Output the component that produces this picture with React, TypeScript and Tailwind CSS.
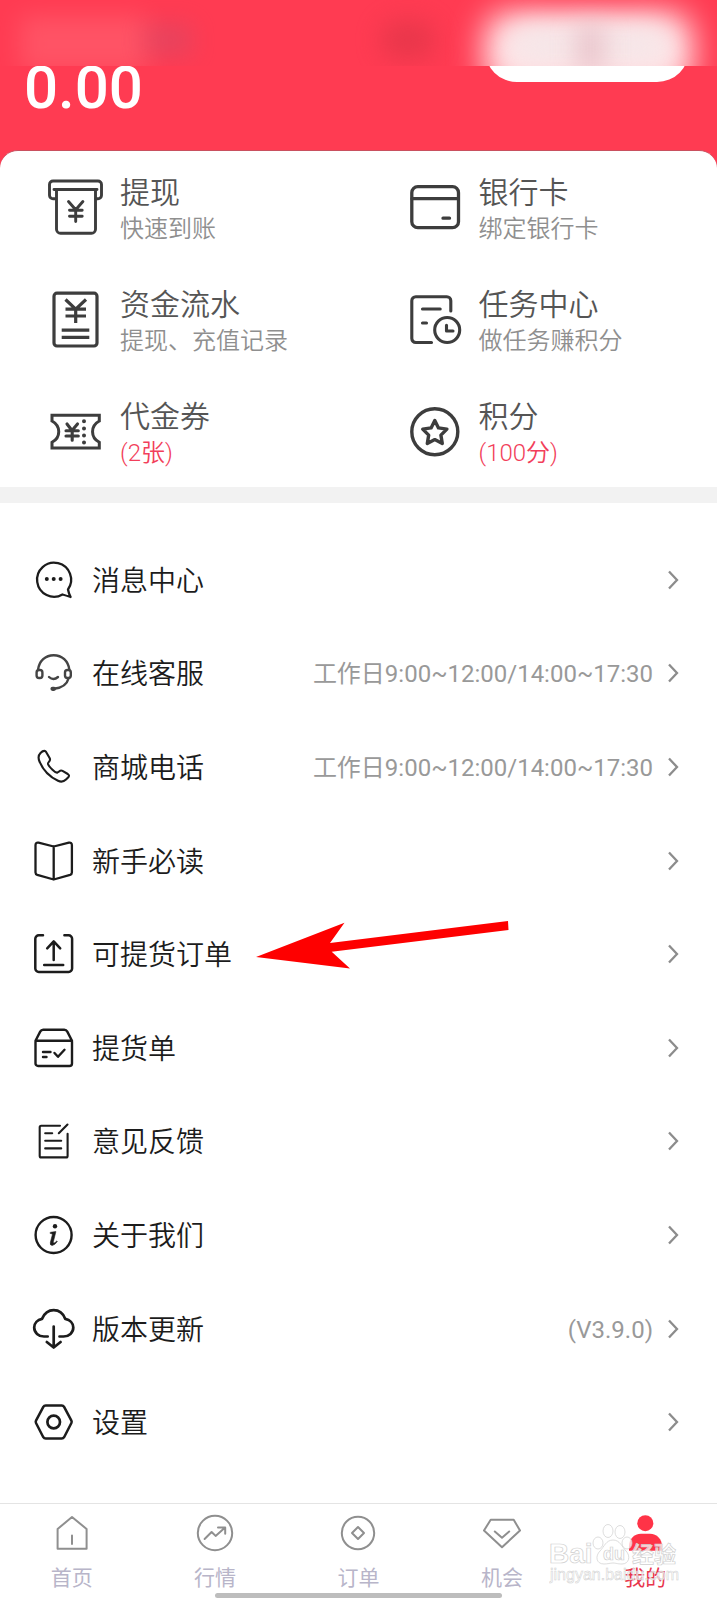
import type { ReactNode } from 'react';
import { clsx } from 'clsx';

type IconProps = { children: ReactNode; size?: 'lg' | 'md'; width?: number };

function Icon({ children, size = 'md', width = 2.4 }: IconProps) {
  return (
    <svg
      viewBox={size === 'lg' ? '0 0 56 56' : '0 0 40 40'}
      className={clsx('shrink-0 overflow-visible', size === 'lg' ? 'size-14' : 'size-10')}
      fill="none"
      stroke="currentColor"
      strokeWidth={width}
      strokeLinecap="round"
      strokeLinejoin="round"
      aria-hidden="true"
    >
      {children}
    </svg>
  );
}

const services = [
  {
    title: '提现',
    note: '快速到账',
    icon: (
      <Icon size="lg" width={2.9}>
        <path d="M7.5 19.7H5a3.5 3.5 0 0 1-3.5-3.5V5.5A3.5 3.5 0 0 1 5 2h45a3.5 3.5 0 0 1 3.5 3.5v10.7a3.5 3.5 0 0 1-3.5 3.5h-2" />
        <path d="M6 10.5h43M8.5 10.5v39.7a4 4 0 0 0 4 4h31a4 4 0 0 0 4-4V10.5" />
        <path d="M20.5 22.5l7.2 8.3 7.2-8.3M21.5 31.3h12.7M21.5 37.3h12.7M27.7 31v11.5" />
      </Icon>
    ),
  },
  {
    title: '银行卡',
    note: '绑定银行卡',
    icon: (
      <Icon size="lg" width={3.3}>
        <rect x="4.8" y="7.7" width="46.7" height="41" rx="6" />
        <path d="M5 19.7h46M36 39.2h6.5" />
      </Icon>
    ),
  },
  {
    title: '资金流水',
    note: '提现、充值记录',
    icon: (
      <Icon size="lg" width={3.2}>
        <rect x="6" y="2.2" width="43" height="52.8" rx="3" />
        <g strokeLinecap="butt">
          <path d="M17.5 8.5l10.2 9.7L38 8.5M17.5 18.2H38M17.5 25H38M27.7 18v14" strokeWidth={3.2} />
          <path d="M13.7 39.2h27.6M13.7 46.4h27.6" strokeWidth={3.2} />
        </g>
      </Icon>
    ),
  },
  {
    title: '任务中心',
    note: '做任务赚积分',
    icon: (
      <Icon size="lg" width={3.1}>
        <path d="M43.8 20V9.7a4 4 0 0 0-4-4h-31a4 4 0 0 0-4 4v37.8a4 4 0 0 0 4 4h15.7" />
        <path d="M15.5 18h17.7M15.5 32h4" />
        <circle cx="40.2" cy="39" r="12.5" />
        <path d="M39.5 34.2V40H46" />
      </Icon>
    ),
  },
  {
    title: '代金券',
    note: '(2张)',
    hot: true,
    icon: (
      <Icon size="lg" width={3}>
        <path
          strokeLinejoin="miter"
          d="M4 12.3h47.3V18c-9 5-9 16.3 0 21.3V45H4v-5.7c9-5 9-16.3 0-21.3z"
        />
        <path d="M19 21l5 6.5 5.5-6.5M18 27.7h12.3M18 33h12.3M24.2 27.5v9.8" strokeWidth={3.1} />
        <path d="M36 18.3v.01M36 25.4v.01M36 32.5v.01M36 39.4v.01" strokeWidth={4} />
      </Icon>
    ),
  },
  {
    title: '积分',
    note: '(100分)',
    hot: true,
    icon: (
      <Icon size="lg" width={3.4}>
        <circle cx="27.8" cy="28.7" r="23" />
        <path d="M27.8 17.5l3.7 7.4 8.4 1.2-6 6 1.4 8.4-7.5-3.9-7.5 3.9 1.4-8.4-6-6 8.4-1.2z" />
      </Icon>
    ),
  },
];

const menu = [
  {
    label: '消息中心',
    icon: (
      <Icon width={2.3}>
        <path d="M34 29.5A17 17 0 1 0 28.5 34.5Q32 35.5 36.6 37Q34.6 33 34 29.5z" />
        <g fill="currentColor" stroke="none">
          <circle cx="12.8" cy="19" r="2" />
          <circle cx="19.7" cy="19" r="2" />
          <circle cx="26.6" cy="19" r="2" />
        </g>
      </Icon>
    ),
  },
  {
    label: '在线客服',
    value: '工作日9:00~12:00/14:00~17:30',
    icon: (
      <Icon width={2.4}>
        <g className="text-[#444]" stroke="currentColor">
          <path d="M4 17C5 8 11.5 2.2 19.7 2.2S34.400 8 35.400 17" />
          <rect x="2.6" y="17" width="5.800" height="8" rx="2.500" />
          <rect x="31" y="17" width="5.800" height="8" rx="2.500" />
          <path d="M15 24q4.400 4.200 9 0M34.500 25.500C33 31.500 27 35 20 35.800" />
          <path d="M18.500 35.800h1.500" strokeWidth={4.200} />
        </g>
      </Icon>
    ),
  },
  {
    label: '商城电话',
    value: '工作日9:00~12:00/14:00~17:30',
    icon: (
      <Icon width={2.1}>
        <path d="M11.8 4.5C10.3 3.3 8.5 4 6.5 6C4 8.5 4 11 5.5 14.5C9 23 16 30 24 33.8C27 35.2 29.5 35 32 32.5L34.3 30.2C35.5 28.8 35 27.8 33.8 27L28.5 23.9C27.3 23.2 26.3 23.5 25.3 24.3L23.5 25.5C22.3 26 21 25.3 18.5 22.8C16 20.3 14.5 18.5 14 17C13.8 16 14.3 15.5 15.2 14.5C16.3 13.3 16.3 12.3 15.6 11z" />
      </Icon>
    ),
  },
  {
    label: '新手必读',
    icon: (
      <Icon width={2.3}>
        <path d="M19.7 5.5L4.500 1.700Q1.500 1.200 1.500 4.200v27.300q0 1.800 1.800 2.400l16.400 4.600 16.400-4.600q1.800-.6 1.800-2.400V4.200q0-3-3-2.500zV38" />
      </Icon>
    ),
  },
  {
    label: '可提货订单',
    arrow: true,
    icon: (
      <Icon width={2.5}>
        <path d="M9 1.3H4.8a3.5 3.5 0 0 0-3.5 3.5v29.6a3.5 3.5 0 0 0 3.5 3.5h29.800a3.5 3.5 0 0 0 3.5-3.5V4.8a3.5 3.5 0 0 0-3.5-3.5h-4.2" />
        <path d="M19.7 26V7.5M13.2 14.3l6.5-7 6.5 7M10.2 31h19" />
      </Icon>
    ),
  },
  {
    label: '提货单',
    icon: (
      <Icon width={2.4}>
        <path d="M1.5 12.8h36.5v22.6a2.6 2.6 0 0 1-2.6 2.6H4.1a2.6 2.6 0 0 1-2.6-2.6zL6.2 3.6q1-1.9 3-1.9h21.1q2 0 3 1.9L38 12.8" />
        <path d="M9 24h7.5M9 29h3.5M20.5 25l3.5 3.8 6.5-7" />
      </Icon>
    ),
  },
  {
    label: '意见反馈',
    icon: (
      <Icon width={2.1}>
        <path d="M26 4.7H7.2a1.5 1.5 0 0 0-1.5 1.5v28.7a1.5 1.5 0 0 0 1.5 1.5h24.9a1.5 1.5 0 0 0 1.5-1.5V12.7" />
        <path d="M33.5 3.5l-8.7 8.7M11.2 12.2h7M11.2 19.7h16M11.2 27.4h16" />
      </Icon>
    ),
  },
  {
    label: '关于我们',
    icon: (
      <Icon width={2.4}>
        <circle cx="19.6" cy="20" r="18" />
        <circle cx="21" cy="11.2" r="2.2" fill="currentColor" stroke="none" />
        <path
          d="M16.6 17.3l5.3-.7-2.5 9.9q-.5 2 .8 1.5 1.2-.5 2.6-2.1l.5.6q-2.4 3.7-5 3.9-2.7 0-1.9-3.2l1.9-7.3q.2-1-.5-1.1l-1.4-.4z"
          fill="currentColor"
          strokeWidth={0.6}
        />
      </Icon>
    ),
  },
  {
    label: '版本更新',
    value: '(V3.9.0)',
    icon: (
      <Icon width={2.7}>
        <path d="M13.7 27.500H10C4.500 27.500.2 23.500.2 18.600.2 14 3.500 10.800 8 9.900 10.500 4 14.500 1.200 19.700 1.200S29 4 31.300 9.900c4.500.9 8 4.100 8 8.700 0 4.900-4.200 8.900-9.800 8.900h-4" />
        <path d="M19.7 17.5V38.3M12.8 33l6.9 5.5 6.9-5.5" />
      </Icon>
    ),
  },
  {
    label: '设置',
    icon: (
      <Icon width={2.5}>
        <path d="M11.7 3.4h16q1.6 0 2.4 1.4l7.300 13.800q.6 1.200 0 2.400l-7.300 14.200q-.8 1.400-2.400 1.400h-16q-1.600 0-2.400-1.400L2 21q-.6-1.200 0-2.400L9.300 4.800q.8-1.400 2.400-1.400z" />
        <circle cx="19.7" cy="20" r="6.3" strokeWidth={2.7} />
      </Icon>
    ),
  },
];

const tabs = [
  {
    label: '首页',
    icon: (
      <Icon width={2}>
        <path d="M20 4L5.6 16v19.8h29V16zM20 22.5v8.5" />
      </Icon>
    ),
  },
  {
    label: '行情',
    icon: (
      <Icon width={2}>
        <circle cx="20" cy="20" r="17.2" />
        <path d="M9.6 26l7-7 4 3.9 9.5-8.3M23 14.5h7.2v6.3" />
      </Icon>
    ),
  },
  {
    label: '订单',
    icon: (
      <Icon width={2}>
        <circle cx="20" cy="20" r="16.2" />
        <path d="M20 14l6 6-6 6-6-6z" />
      </Icon>
    ),
  },
  {
    label: '机会',
    icon: (
      <Icon width={2}>
        <path d="M8.7 6.7h23L38 17.6 20 34.3 2 17.6zM12.8 18.5l7.2 6.2 7.2-6.2" />
      </Icon>
    ),
  },
  {
    label: '我的',
    active: true,
    icon: (
      <Icon width={0}>
        <g fill="currentColor" stroke="none">
          <circle cx="20.3" cy="10.2" r="8" />
          <path d="M4 37.8v-4.5c0-7 5-12.5 12-12.5h9c7 0 12 5.5 12 12.5v4.5z" />
        </g>
      </Icon>
    ),
  },
];

function Chevron() {
  return (
    <svg viewBox="0 0 12 20" className="h-5 w-3 shrink-0 text-[#8c8c8c]" fill="none" stroke="currentColor" strokeWidth="2.3" aria-hidden="true">
      <path d="M2 1.500l8 8.500-8 8.500" />
    </svg>
  );
}

function PointerArrow() {
  return (
    <svg viewBox="0 0 254 50" className="absolute left-64 top-3.5 h-[50px] w-[254px]" aria-hidden="true">
      <path d="M0 36L88.5 1.7 74 22 252 0 252.5 9 75.7 30.7 94 47.5z" fill="#fe0000" />
    </svg>
  );
}

function Watermark() {
  return (
    <svg
      viewBox="0 0 134 64"
      className="pointer-events-none absolute bottom-4 right-[34px] h-16 w-[134px]"
      fill="#fff"
      stroke="#cfcfcf"
      strokeWidth="0.7"
      fontFamily="'Liberation Sans', 'Noto Sans CJK SC', sans-serif"
      aria-hidden="true"
    >
      <g fillOpacity="0.75">
        <text x="0" y="43" fontSize="28" fontWeight="700">Bai</text>
        <ellipse cx="49" cy="23" rx="5" ry="6" />
        <ellipse cx="59" cy="11" rx="5" ry="6.5" />
        <ellipse cx="71" cy="12" rx="5" ry="6.5" />
        <ellipse cx="78" cy="23" rx="5" ry="6" />
        <path d="M64 20c7 0 9 7 13 11 5 5 3 13-4 13-5 0-6-1-9-1s-5 1-9 1c-8 0-9-8-4-13 4-4 6-11 13-11z" />
        <text x="54" y="40" fontSize="18" fontWeight="700">du</text>
        <text x="83" y="42" fontSize="22" fontWeight="700">经验</text>
        <text x="1" y="60" fontSize="16" strokeWidth="0.5">jingyan.baidu.com</text>
      </g>
    </svg>
  );
}

function Header() {
  return (
    <header className="relative bg-[#ff3b52] pb-8 text-white">
      <div className="flex items-end justify-between pl-6 pr-7">
        <p className="pt-[58px] text-[60px] font-medium leading-[60px]">0.00</p>
        <button type="button" aria-label="充值" className="mb-9 h-16 w-[204px] rounded-full bg-white" />
      </div>

      {/* privacy strip over the account row */}
      <div className="absolute inset-x-0 top-0 h-[66px] overflow-hidden bg-[#ff3b52]" aria-hidden="true">
        <div className="absolute left-5 top-4 h-14 w-32 bg-[#ff6b78] opacity-50 blur-md" />
        <div className="absolute left-36 top-6 h-8 w-12 bg-[#c25070] opacity-40 blur-md" />
        <div className="absolute left-[380px] top-5 h-10 w-14 rounded-full bg-[#e03548] opacity-70 blur-md" />
        <div className="absolute left-[484px] right-6 top-3 h-20 rounded-3xl bg-[#ffe6e8] blur-lg" />
        <div className="absolute left-[510px] right-12 top-6 h-10 rounded-3xl bg-[#f6e6e8] blur-md" />
        <div className="absolute left-[576px] right-28 top-6 h-12 bg-[#e6b9c2] opacity-70 blur-md" />
      </div>
    </header>
  );
}

export default function App() {
  return (
    <div className="flex min-h-screen flex-col bg-[#ff3b52] font-['Roboto','Noto_Sans_CJK_SC',sans-serif]">
      <Header />

      <main className="flex flex-1 flex-col rounded-t-[18px] border-t border-[#c9505f] bg-white">
        <section className="grid grid-cols-2">
          {services.map(({ title, note, hot, icon }) => (
            <a key={title} href="#" className="flex h-28 items-center gap-4 pl-12 text-[#3d3d3d]">
              {icon}
              <span className="flex flex-col pt-2">
                <span className="text-[30px] font-[350] leading-9 text-[#555]">{title}</span>
                <span className={clsx('text-2xl font-[350] leading-9', hot ? 'text-[#f23f5b]' : 'text-[#8f8f8f]')}>{note}</span>
              </span>
            </a>
          ))}
        </section>

        <div className="h-4 bg-[#f2f2f2]" />

        <ul className="flex flex-1 flex-col pb-[34px] pt-[30px]">
          {menu.map(({ label, value, icon, arrow }) => (
            <li key={label} className="relative flex flex-1">
              <a href="#" className="flex min-h-20 flex-1 items-center pl-[34px] pr-[38px] text-[#1c1c1c]">
                {icon}
                <span className="ml-[18px] flex-1 pt-1 text-[28px] font-[350] leading-10">{label}</span>
                {value && <span className="mr-3.5 pt-0.5 text-2xl text-[#999]">{value}</span>}
                <Chevron />
              </a>
              {arrow && <PointerArrow />}
            </li>
          ))}
        </ul>
      </main>

      <nav className="relative grid grid-cols-5 border-t border-[#e4e4e4] bg-white pb-[7px] pt-[9px]">
        {tabs.map(({ label, icon, active }) => (
          <a
            key={label}
            href="#"
            aria-current={active ? 'page' : undefined}
            className={clsx('flex flex-col items-center gap-2.5', active ? 'text-[#ff3347]' : 'text-[#8f8f8f]')}
          >
            {icon}
            <span className={clsx('text-[21px] leading-[30px]', active ? 'text-[#e8354c]' : 'text-[#b8b5c9]')}>{label}</span>
          </a>
        ))}
        <Watermark />
        <div className="absolute bottom-0.5 left-[30%] right-[30%] h-[5px] rounded-full bg-[#bdbdbd]" />
      </nav>
    </div>
  );
}
